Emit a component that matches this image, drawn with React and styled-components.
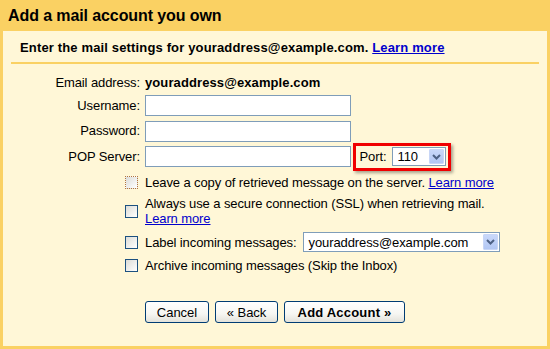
import React from 'react';
import styled, { createGlobalStyle } from 'styled-components';

const GlobalStyle = createGlobalStyle`
  body {
    margin: 0;
    font-family: "Liberation Sans", Arial, sans-serif;
    font-size: 13px;
    color: #000;
  }
`;

const Frame = styled.div`
  width: 550px;
  height: 349px;
  box-sizing: border-box;
  background: #fad163;
  padding: 0 3px 3px 3px;
  display: flex;
  flex-direction: column;
`;

const Title = styled.h1`
  margin: 0;
  height: 31px;
  box-sizing: border-box;
  padding: 6px 0 0 5px;
  font-size: 16px;
  line-height: 20px;
  font-weight: bold;
  letter-spacing: -0.1px;
`;

const Panel = styled.main`
  flex: 1;
  background: #fff7d7;
  display: flex;
  flex-direction: column;
  letter-spacing: -0.1px;
`;

const Intro = styled.div`
  margin: 0 8px;
  padding: 9px 9px 6px 9px;
  border-bottom: 2px solid #fad163;
  font-weight: bold;
  line-height: 16px;
  letter-spacing: 0.15px;
`;

const Link = styled.a`
  color: #0000cc;
  text-decoration: underline;
  cursor: pointer;
`;

const Form = styled.div`
  margin-top: 10.5px;
  display: flex;
  flex-direction: column;
  gap: 4.5px;
`;

const Row = styled.div`
  display: flex;
  align-items: center;
  gap: 5px;
  line-height: 16px;
  min-height: 16px;
`;

const Label = styled.label`
  width: 137px;
  text-align: right;
  flex-shrink: 0;
`;

const Value = styled.span`
  font-weight: bold;
  letter-spacing: 0.1px;
`;

const TextInput = styled.input`
  width: 206px;
  height: 21px;
  box-sizing: border-box;
  border: 1px solid #7f9db9;
  background: #fff;
  margin: 0;
  padding: 1px 3px;
  font: inherit;
`;

const PortBox = styled.div`
  margin: -4px 0 -4px -3px;
  width: 98px;
  height: 28px;
  box-sizing: border-box;
  border: 3px solid #f00000;
  box-shadow: 2px 2px 3px rgba(0, 0, 0, 0.35);
  display: flex;
  align-items: center;
  justify-content: space-between;
  padding: 0 2.5px 0 3.5px;
  background: #fff7d7;
`;

const SelectBox = styled.div`
  width: ${(p) => p.$width}px;
  height: ${(p) => p.$height}px;
  box-sizing: border-box;
  border: 1px solid #7f9db9;
  background: #fff;
  display: flex;
  align-items: stretch;
  padding: 1px;
`;

const SelectText = styled.span`
  flex: 1;
  padding-left: 4px;
  display: flex;
  align-items: center;
  white-space: nowrap;
  overflow: hidden;
`;

const DropButton = styled.span`
  width: 15px;
  flex-shrink: 0;
  border-radius: 1px;
  background: linear-gradient(#c9d8fa, #b2c7f3);
  border: 1px solid #c8d6f6;
  box-sizing: border-box;
  display: flex;
  align-items: center;
  justify-content: center;
`;

const Options = styled.div`
  margin-top: 8px;
  margin-left: 122px;
  display: flex;
  flex-direction: column;
  gap: 6px;
`;

const Option = styled.div`
  display: flex;
  align-items: center;
  gap: 7px;
  line-height: 15px;
`;

const Check = styled.span`
  width: 13px;
  height: 13px;
  box-sizing: border-box;
  flex-shrink: 0;
  border: 1px ${(p) => (p.$focus ? 'dotted #b5763a' : 'solid #1c5180')};
  background: linear-gradient(135deg, #dcdcd7, #ffffff);
`;

const OptionText = styled.span`
  display: flex;
  align-items: center;
  gap: 6px;
`;

const Buttons = styled.div`
  margin-top: 28px;
  margin-left: 142px;
  display: flex;
  gap: 6px;
`;

const Button = styled.button`
  height: 22px;
  width: ${(p) => p.$width}px;
  box-sizing: border-box;
  border: 1px solid #003c74;
  border-radius: 3px;
  background: linear-gradient(#ffffff 0%, #f6f6f2 60%, #e3e2da 100%);
  font: inherit;
  font-weight: ${(p) => (p.$primary ? 'bold' : 'normal')};
  letter-spacing: ${(p) => (p.$primary ? '0.2px' : '0')};
  color: #000;
  padding: 0;
  margin: 0;
`;

function Chevron() {
  return (
    <svg width="9" height="6" viewBox="0 0 9 6">
      <path d="M1 1 L4.5 4.5 L8 1" fill="none" stroke="#4d6185" strokeWidth="2" />
    </svg>
  );
}

function Select({ value, width, height }) {
  return (
    <SelectBox $width={width} $height={height}>
      <SelectText>{value}</SelectText>
      <DropButton>
        <Chevron />
      </DropButton>
    </SelectBox>
  );
}

export default function App() {
  return (
    <>
      <GlobalStyle />
      <Frame>
        <Title>Add a mail account you own</Title>
        <Panel>
          <Intro>
            Enter the mail settings for youraddress@example.com. <Link>Learn more</Link>
          </Intro>
          <Form>
            <Row>
              <Label>Email address:</Label>
              <Value>youraddress@example.com</Value>
            </Row>
            <Row>
              <Label>Username:</Label>
              <TextInput />
            </Row>
            <Row>
              <Label>Password:</Label>
              <TextInput type="password" />
            </Row>
            <Row>
              <Label>POP Server:</Label>
              <TextInput />
              <PortBox>
                <span>Port:</span>
                <Select value="110" width={54} height={19} />
              </PortBox>
            </Row>
          </Form>
          <Options>
            <Option>
              <Check $focus />
              <span>
                Leave a copy of retrieved message on the server. <Link>Learn more</Link>
              </span>
            </Option>
            <Option>
              <Check />
              <span>
                Always use a secure connection (SSL) when retrieving mail.
                <br />
                <Link>Learn more</Link>
              </span>
            </Option>
            <Option>
              <Check />
              <OptionText>
                Label incoming messages:
                <Select value="youraddress@example.com" width={197} height={20} />
              </OptionText>
            </Option>
            <Option>
              <Check />
              <span>Archive incoming messages (Skip the Inbox)</span>
            </Option>
          </Options>
          <Buttons>
            <Button $width={64}>Cancel</Button>
            <Button $width={63}>« Back</Button>
            <Button $width={121} $primary>
              Add Account »
            </Button>
          </Buttons>
        </Panel>
      </Frame>
    </>
  );
}
